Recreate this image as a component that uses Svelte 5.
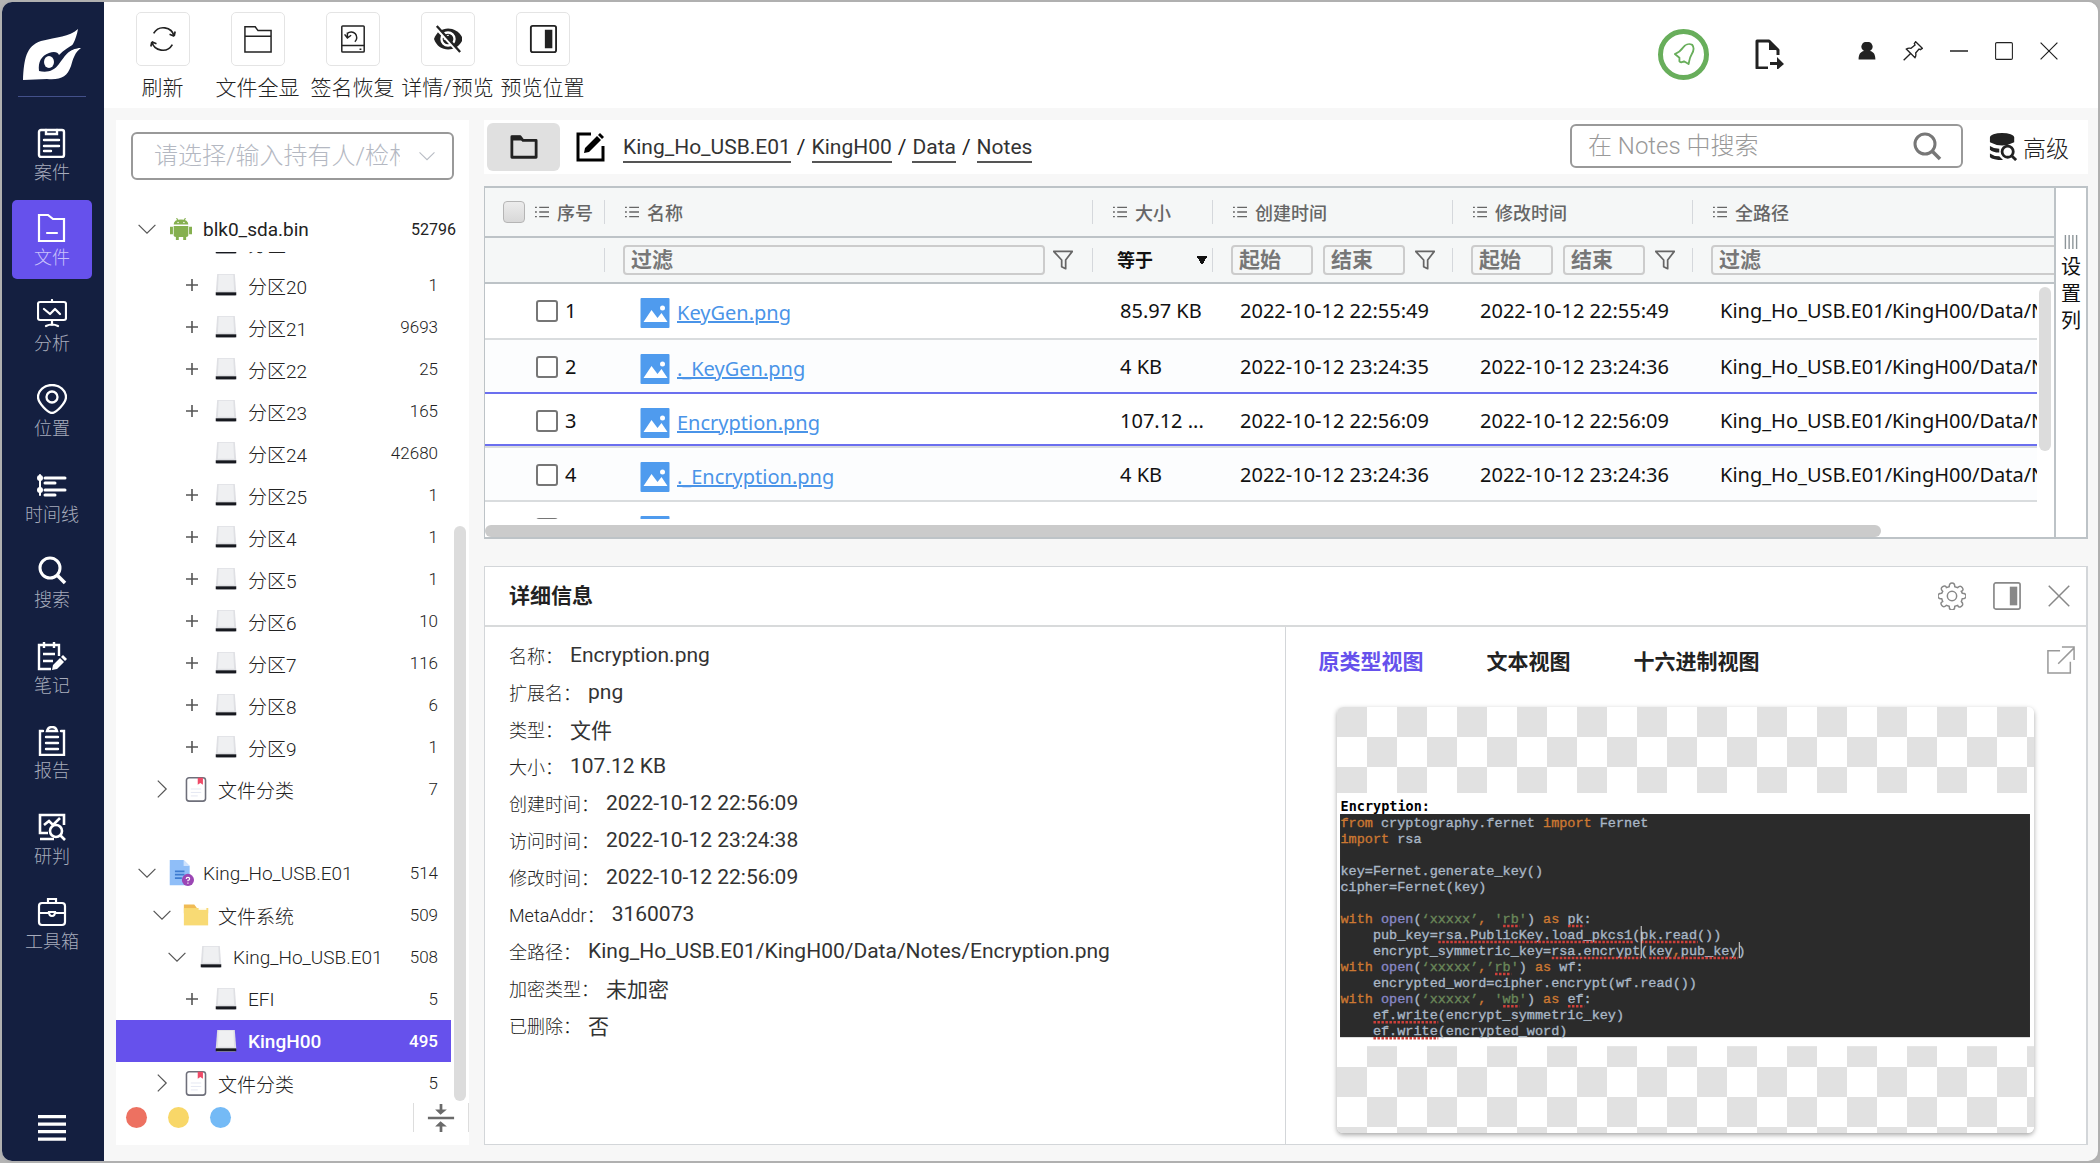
<script>
     const stroke = 'fill="none" stroke="currentColor"';

     const icons = {
          logo: `<path fill="#fff" d="M0 52C1 31 3 18 18 13C34 9 46 9 55 1C53 12 49 19 43 26C48 21 52 20 58 20C52 24 50 31 48 38C44 49 38 52 24 51Z"/><path fill="#141f40" d="M16 43C15 34 18 28 26 25C31 23 35 24 36 27C41 22 46 19 51 16L58 20C45 20 41 30 36 36C31 43 24 45 16 43Z"/><ellipse fill="#fff" cx="26" cy="34" rx="5" ry="6"/>`,
          case: `<g ${stroke} stroke-width="2.4" stroke-linecap="round"><rect x="2" y="2" width="25" height="27" rx="2"/><path d="M9 2v4h11V2M7 12h15M7 18h15M7 23h7"/></g>`,
          file: `<g ${stroke} stroke-width="2.2"><path d="M2 2h9l5 4h11v22H2Z"/><path d="M10 20h10" stroke-linecap="round"/></g>`,
          analyze: `<g ${stroke} stroke-width="2.2" stroke-linecap="round" stroke-linejoin="round"><rect x="1" y="3" width="28" height="18" rx="2"/><path d="M15 1v2M15 21v5M9 27q6-3 12 0M7 10l6 5 5-5 5 5"/></g>`,
          place: `<g ${stroke} stroke-width="2.3"><path d="M15 29C11 29 1 19 1 13A14 12 0 0 1 29 13C29 19 19 29 15 29Z"/><circle cx="15" cy="13" r="5.500"/></g>`,
          timeline: `<g ${stroke} stroke-width="3" stroke-linecap="round"><path d="M3 5v20" stroke-width="2"/><path d="M8 8h20M8 13h10M8 20h20M8 25h10"/></g><circle cx="3" cy="8" r="3" fill="currentColor"/><circle cx="3" cy="20" r="3" fill="currentColor"/>`,
          search: `<g ${stroke} stroke-width="3"><circle cx="13" cy="13" r="10"/><path d="M20 20l8 8" stroke-width="3.500"/></g>`,
          notes: `<g ${stroke} stroke-width="2.4"><path d="M14 28H2V4h20v11M7 1v6M17 1v6M6 13h12M6 20h10"/></g><path fill="currentColor" d="M15 29l1-5 7-7 4 4-7 7ZM24 16l2-2 4 4-2 2Z"/>`,
          report: `<g ${stroke} stroke-width="2.4" stroke-linecap="round"><path d="M6 5H3v24h24V5h-3M10 5q1-4 5-4t5 4ZM9 11h12M9 17h12M9 23h12"/></g>`,
          judge: `<g ${stroke} stroke-width="2.600"><path d="M27 13V3H3v18h8M3 27h14M7 13l5-4 4 4 7-7"/><circle cx="19" cy="19" r="6"/><path d="M23 23l5 5"/></g>`,
          toolbox: `<g ${stroke} stroke-width="2.2"><rect x="2" y="6" width="26" height="22" rx="3"/><path d="M11 6V2h8v4M2 16h10M18 16h10M12 15q0 4 3 4t3-4Z"/></g>`,
          refresh: `<g ${stroke} stroke-width="1.8"><path d="M5 9A12 12 0 0 1 27 12M27 12l-5-2M27 12l1-5M25 21A12 12 0 0 1 3 18M3 18l5 2M3 18l-1 5"/></g>`,
          folder: `<g ${stroke} stroke-width="1.6"><path d="M1 29V2h11l3 4h14v23ZM1 12h28"/></g>`,
          restore: `<g ${stroke} stroke-width="1.6"><rect x="3" y="1" width="24" height="28" rx="1"/><path d="M3 22h24M9 9a6 6 0 1 1 8 9M9 8v5M6 10l3 4 4-3M22 26h2"/></g>`,
          hide: `<path fill="currentColor" d="M0 15C5 0 25 0 31 15C25 30 5 30 0 15Z"/><circle cx="15" cy="15" r="7" fill="none" stroke="#fff" stroke-width="2.500"/><path d="M11 16q0-5 5-5" stroke="#fff" fill="none"/><path d="M1 2l25 27" stroke="#fff" stroke-width="3"/><path d="M3 1l25 28" stroke="currentColor" stroke-width="2.500"/>`,
          dock: `<rect x="2" y="1" width="27" height="28" rx="2" ${stroke} stroke-width="2"/><path fill="currentColor" d="M17 5h8v20h-8Z"/>`,
          tab: `<path ${stroke} stroke-width="3" stroke-linejoin="round" d="M2 4h9l3 4h14v18H2Z"/><path fill="currentColor" d="M2 3h9l3 5H2Z"/>`,
          edit: `<path ${stroke} stroke-width="3" d="M16 2H3v26h25V14"/><path fill="currentColor" d="M9 21l1-5L22 4l4 4-12 12ZM23 3l2-2 4 4-2 2Z"/>`,
          bell: `<path ${stroke} stroke-width="2" stroke-linejoin="round" d="M2 12C7 10 9 8 11 5C13 2 17 0 21 2C24 6 22 10 20 13C18 16 18 19 17 23L12 20Q9 22 7 20L7 16Z"/>`,
          exportDoc: `<path ${stroke} stroke-width="3" stroke-linejoin="round" d="M14 29H3V2h12l9 9v5"/><path fill="currentColor" d="M15 1v10h10ZM16 23h7v-5l7 7-7 6v-5h-7Z"/>`,
          person: `<path fill="currentColor" d="M15 0a8 8 0 0 1 5 15c6 1 9 6 9 14H1c0-8 3-13 9-14A8 8 0 0 1 15 0Z"/>`,
          pin: `<g ${stroke} stroke-width="2"><path d="M19 1l10 10-3 2-2-1-5 6q1 4-1 7L5 12q3-2 7-1l6-5-1-2ZM11 19L1 29"/></g>`,
          minus: `<path ${stroke} stroke-width="2.500" d="M0 15h30"/>`,
          square: `<rect x="1" y="1" width="28" height="28" rx="2" ${stroke} stroke-width="1.800"/>`,
          close: `<path ${stroke} stroke-width="2" d="M1 1l28 28M29 1L1 29"/>`,
          dbSearch: `<ellipse cx="14" cy="5" rx="13" ry="5" fill="currentColor"/><path fill="currentColor" d="M1 5h26v5q-13 7-26 0ZM1 14q4 3 10 3v4Q4 21 1 18ZM1 22q4 3 10 3l4 4Q4 29 1 26Z"/><g stroke="currentColor" fill="#fff" stroke-width="3"><circle cx="20" cy="20" r="6"/><path d="M24 24l5 5"/></g>`,
          gear: `<g ${stroke} stroke-width="1.600"><path d="M12 5q0-4 3-4t3 4l3 1q3-3 5 0t-1 4l1 2q4 0 4 3t-4 3l-1 3q3 3 0 5t-4-1l-3 1q0 4-3 4t-3-4l-3-1q-3 3-5 0t1-4l-1-3q-4 0-4-3t4-3l1-2q-3-3 0-5t4 1Z"/><circle cx="15" cy="15" r="5"/></g>`,
          dockLight: `<rect x="1" y="1" width="28" height="28" rx="2" ${stroke} stroke-width="1.800"/><path fill="currentColor" d="M18 5h8v20h-8Z"/>`,
          external: `<path ${stroke} stroke-width="1.600" d="M14 5H1v24h24V17M12 19L29 2M16 1h13v14"/>`,
          list: `<path ${stroke} stroke-width="3" d="M9 5h21M9 15h21M9 25h21M0 5h4M0 15h4M0 25h4"/>`,
          funnel: `<path ${stroke} stroke-width="2.600" stroke-linejoin="round" d="M1 2h28L19 15v13l-6-3V15Z"/>`,
          down: `<path ${stroke} stroke-width="2" d="M1 8l14 14L29 8"/>`,
          right: `<path ${stroke} stroke-width="2" d="M8 1l14 14L8 29"/>`,
          plus: `<path ${stroke} stroke-width="4" d="M15 0v30M0 15h30"/>`,
          disk: `<path fill="#dfe0e4" d="M3 0h24l2 26H1Z"/><path fill="#eff0f2" d="M5 1h20l1 22H4Z"/><path fill="#17191f" d="M1 25h28v4H1Z"/><path fill="#8b8d92" d="M2 29h26v1H2Z"/>`,
          android: `<path fill="#85b04f" d="M5 9q0-7 10-7t10 7ZM5 11h20v13q0 2-3 2v4h-4v-4h-6v4H8v-4q-3 0-3-2ZM0 12h4v10H0ZM26 12h4v10h-4Z"/><path d="M9 0l2 4M21 0l-2 4" stroke="#85b04f" stroke-width="1.500"/><circle cx="11" cy="6" r="1" fill="#fff"/><circle cx="19" cy="6" r="1" fill="#fff"/>`,
          category: `<rect x="4" y="2" width="22" height="27" rx="3" fill="#fff" stroke="#6e6f7a" stroke-width="1.800"/><path fill="#ef4b68" d="M17 2h6v8l-3-2-3 2Z"/><path d="M9 15h12M9 19h12M9 23h8" stroke="#e1e4f0"/>`,
          image: `<path fill="#8fbef8" d="M2 0h16l7 7v22H2Z"/><path fill="#cfe3fd" d="M18 0l7 7h-7Z"/><path d="M8 13h11M8 17h11M8 21h8" stroke="#3d7bd0" stroke-width="2"/><circle cx="23" cy="23" r="7" fill="#9b46b4"/><path d="M21 22q0-2 2-2t2 1.500-2 2v1M23 26v1.500" stroke="#fff" stroke-width="1.300" fill="none"/>`,
          yellow: `<path fill="#f0bb55" d="M1 3h12l3 4h13v6H1Z"/><path fill="#f8da74" d="M1 7h28v20H1Z"/><path d="M18 8h9" stroke="#fff" stroke-width="2"/>`,
          picture: `<rect width="29" height="30" rx="1" fill="#4f9bee"/><path fill="#fff" d="M3 24l8-12 6 8 4-5 6 9Z"/><circle cx="22" cy="10" r="2.500" fill="#fff"/>`,
          collapse: `<path fill="#6a6a6a" d="M13 0h3v6h5l-7 6-6-6h5ZM0 14h29v3H0ZM14 19l7 6h-5v6h-3v-6H8Z"/>`,
          menu: `<path ${stroke} stroke-width="3.500" d="M0 4h30M0 12h30M0 20h30M0 28h30"/>`,
          columns: `<path stroke="#8d9599" stroke-width="3" d="M2 0v30M10 0v30M18 0v30M26 0v30"/>`
     };

     const nav = [
          ['case', '案件'], ['file', '文件'], ['analyze', '分析'], ['place', '位置'], ['timeline', '时间线'],
          ['search', '搜索'], ['notes', '笔记'], ['report', '报告'], ['judge', '研判'], ['toolbox', '工具箱']
     ];
     let activeNav = $state('文件');

     const tools = [
          ['refresh', '刷新'], ['folder', '文件全显'], ['restore', '签名恢复'], ['hide', '详情/预览'], ['dock', '预览位置']
     ];

     const part = (n, count, arrow = 'plus') => ({ level: 4, arrow, icon: 'disk', name: `分区${n}`, count });
     const tree = [
          part(2, ''),
          part(20, 1), part(21, 9693), part(22, 25), part(23, 165), part(24, 42680, ''), part(25, 1),
          part(4, 1), part(5, 1), part(6, 10), part(7, 116), part(8, 6), part(9, 1),
          { level: 2, arrow: 'right', icon: 'category', name: '文件分类', count: 7 },
          null,
          { level: 1, arrow: 'down', icon: 'image', name: 'King_Ho_USB.E01', count: 514 },
          { level: 2, arrow: 'down', icon: 'yellow', name: '文件系统', count: 509 },
          { level: 3, arrow: 'down', icon: 'disk', name: 'King_Ho_USB.E01', count: 508 },
          { level: 4, arrow: 'plus', icon: 'disk', name: 'EFI', count: 5 },
          { level: 4, arrow: '', icon: 'disk', name: 'KingH00', count: 495 },
          { level: 2, arrow: 'right', icon: 'category', name: '文件分类', count: 5 }
     ];
     let selectedNode = $state('KingH00');

     const crumbs = ['King_Ho_USB.E01', 'KingH00', 'Data', 'Notes'];
     const headers = ['名称', '大小', '创建时间', '修改时间', '全路径'];

     const path = 'King_Ho_USB.E01/KingH00/Data/Notes/';
     const files = [
          { name: 'KeyGen.png', size: '85.97 KB', created: '2022-10-12 22:55:49', modified: '2022-10-12 22:55:49' },
          { name: '._KeyGen.png', size: '4 KB', created: '2022-10-12 23:24:35', modified: '2022-10-12 23:24:36' },
          { name: 'Encryption.png', size: '107.12 ...', created: '2022-10-12 22:56:09', modified: '2022-10-12 22:56:09' },
          { name: '._Encryption.png', size: '4 KB', created: '2022-10-12 23:24:36', modified: '2022-10-12 23:24:36' },
          { name: '', size: '', created: '', modified: '' }
     ];
     let selectedRow = $state(2);

     const details = [
          ['名称', 'Encryption.png'], ['扩展名', 'png'], ['类型', '文件'], ['大小', '107.12 KB'],
          ['创建时间', '2022-10-12 22:56:09'], ['访问时间', '2022-10-12 23:24:38'], ['修改时间', '2022-10-12 22:56:09'],
          ['MetaAddr', '3160073'], ['全路径', 'King_Ho_USB.E01/KingH00/Data/Notes/Encryption.png'],
          ['加密类型', '未加密'], ['已删除', '否']
     ];

     const views = ['原类型视图', '文本视图', '十六进制视图'];
     let view = $state('原类型视图');

     // k = keyword, b = builtin, s = string, t = plain; a third item marks a spell-check underline
     const source = [
          [['k', 'from'], ['t', ' cryptography.fernet '], ['k', 'import'], ['t', ' Fernet']],
          [['k', 'import'], ['t', ' rsa']],
          [],
          [['t', 'key=Fernet.generate_key()']],
          [['t', 'cipher=Fernet(key)']],
          [],
          [['k', 'with'], ['b', ' open'], ['t', '('], ['s', '‘xxxxx’'], ['k', ','], ['s', " '"], ['s', 'rb', 1], ['s', "'"], ['t', ') '], ['k', 'as'], ['t', ' '], ['t', 'pk', 1], ['t', ':']],
          [['t', '    pub_key='], ['t', 'rsa.PublicKey.load_pkcs1', 1], ['t', '('], ['t', 'pk.read', 1], ['t', '())']],
          [['t', '    encrypt_symmetric_key='], ['t', 'rsa.encrypt', 1], ['t', '('], ['t', 'key', 1], ['k', ',', 1], ['t', 'pub_key', 1], ['t', ')']],
          [['k', 'with'], ['b', ' open'], ['t', '('], ['s', '‘xxxxx’'], ['k', ','], ['s', '’'], ['s', 'rb', 1], ['s', "'"], ['t', ') '], ['k', 'as'], ['t', ' wf:']],
          [['t', '    encrypted_word=cipher.encrypt(wf.read())']],
          [['k', 'with'], ['b', ' open'], ['t', '('], ['s', '‘xxxxx’'], ['k', ','], ['s', " '"], ['s', 'wb', 1], ['s', "'"], ['t', ') '], ['k', 'as'], ['t', ' '], ['t', 'ef', 1], ['t', ':']],
          [['t', '    '], ['t', 'ef.write', 1], ['t', '(encrypt_symmetric_key)']],
          [['t', '    '], ['t', 'ef.write', 1], ['t', '(encrypted_word)']]
     ];

     const charWidth = 16.2;
     const squiggles = source.flatMap((line, row) => {
          let col = 0;
          const out = [];
          for (const [, text, bad] of line) {
               if (bad) out.push({ x: 8 + col * charWidth, w: text.length * charWidth, y: 74 + row * 32 });
               col += text.length;
          }
          return out;
     });
</script>

{#snippet icon(name, cls, box = '0 0 30 30')}
     <svg class="icon {cls}" viewBox={box} aria-hidden="true">{@html icons[name]}</svg>
{/snippet}

<div class="window">
     <aside class="sidebar">
          {@render icon('logo', 'logo', '0 0 58 52')}
          <nav>
               {#each nav as [key, label]}
                    <button class="nav-item" class:active={activeNav === label} onclick={() => (activeNav = label)}>
                         {@render icon(key, 'i30')}
                         <span>{label}</span>
                    </button>
               {/each}
          </nav>
          <button class="menu" aria-label="菜单">{@render icon('menu', 'i28')}</button>
     </aside>

     <div class="content">
          <header class="topbar">
               <div class="tools">
                    {#each tools as [key, label]}
                         <button class="tool">
                              <span class="tool-box">{@render icon(key, 'i28')}</span>
                              <span class="tool-label">{label}</span>
                         </button>
                    {/each}
               </div>
               <div class="status">
                    <button class="bell" aria-label="通知">{@render icon('bell', 'i22', '0 0 24 24')}</button>
                    <button aria-label="导出">{@render icon('exportDoc', 'i30')}</button>
               </div>
               <div class="controls">
                    <button aria-label="用户">{@render icon('person', 'i18')}</button>
                    <button aria-label="置顶">{@render icon('pin', 'i20')}</button>
                    <button aria-label="最小化">{@render icon('minus', 'i18')}</button>
                    <button aria-label="最大化">{@render icon('square', 'i18')}</button>
                    <button aria-label="关闭">{@render icon('close', 'i18')}</button>
               </div>
          </header>

          <div class="workspace">
               <section class="tree-panel">
                    <label class="owner">
                         <input type="text" placeholder="请选择/输入持有人/检材名称" aria-label="持有人" />
                         {@render icon('down', 'i16 faint')}
                    </label>
                    <button class="node root">
                         <span class="arrow">{@render icon('down', 'i18')}</span>
                         <span class="node-icon">{@render icon('android', 'i22')}</span>
                         <span class="node-name">blk0_sda.bin</span>
                         <span class="count">52796</span>
                    </button>
                    <div class="tree-area">
                         <div class="tree">
                              {#each tree as node}
                                   {#if node}
                                        <button
                                             class="node"
                                             class:selected={selectedNode === node.name}
                                             style={`padding-left: ${node.level * 15}px;`}
                                             onclick={() => (selectedNode = node.name)}
                                        >
                                             <span class="arrow">
                                                  {#if node.arrow}{@render icon(node.arrow, node.arrow === 'plus' ? 'i12' : 'i18')}{/if}
                                             </span>
                                             <span class="node-icon">{@render icon(node.icon, node.icon === 'disk' ? 'i22' : 'i26')}</span>
                                             <span class="node-name">{node.name}</span>
                                             <span class="count">{node.count}</span>
                                        </button>
                                   {:else}
                                        <div class="node"></div>
                                   {/if}
                              {/each}
                         </div>
                         <div class="tree-scroll"><div class="thumb"></div></div>
                    </div>
                    <footer class="tree-footer">
                         <button class="dot red" aria-label="红色标记"></button>
                         <button class="dot yellow" aria-label="黄色标记"></button>
                         <button class="dot blue" aria-label="蓝色标记"></button>
                         <button class="collapse" aria-label="全部折叠">{@render icon('collapse', 'i28', '0 0 29 31')}</button>
                    </footer>
               </section>

               <main>
                    <div class="crumb-bar">
                         <button class="tab" aria-label="文件夹">{@render icon('tab', 'i28')}</button>
                         <button class="edit" aria-label="编辑路径">{@render icon('edit', 'i30')}</button>
                         <div class="crumbs">
                              {#each crumbs as crumb, i}
                                   {#if i}<span>/</span>{/if}
                                   <a href="#{crumb}">{crumb}</a>
                              {/each}
                         </div>
                         <label class="search">
                              <input type="text" placeholder="在 Notes 中搜索" aria-label="搜索" />
                              {@render icon('search', 'i30')}
                         </label>
                         <button class="advanced">{@render icon('dbSearch', 'i28')}高级</button>
                    </div>

                    <section class="grid">
                         <div class="grid-main">
                              <table>
                                   <colgroup>
                                        <col class="c-seq" /><col class="c-name" /><col class="c-size" />
                                        <col class="c-date" /><col class="c-date" /><col class="c-path" />
                                   </colgroup>
                                   <thead>
                                        <tr class="titles">
                                             <th><div class="th seq"><input type="checkbox" class="check all" aria-label="全选" />{@render icon('list', 'i14')}序号</div></th>
                                             {#each headers as header}
                                                  <th><div class="th">{@render icon('list', 'i14')}{header}</div></th>
                                             {/each}
                                        </tr>
                                        <tr class="filters">
                                             <td><div class="th"></div></td>
                                             <td><div class="th"><input class="filter" placeholder="过滤" aria-label="过滤名称" />{@render icon('funnel', 'i20')}</div></td>
                                             <td><div class="th"><select aria-label="大小条件"><option>等于</option></select></div></td>
                                             {#each ['创建', '修改'] as kind}
                                                  <td>
                                                       <div class="th dates">
                                                            <input class="filter date" placeholder="起始" aria-label="{kind}起始" />
                                                            <input class="filter date" placeholder="结束" aria-label="{kind}结束" />
                                                            {@render icon('funnel', 'i20')}
                                                       </div>
                                                  </td>
                                             {/each}
                                             <td><div class="th"><input class="filter" placeholder="过滤" aria-label="过滤路径" /></div></td>
                                        </tr>
                                   </thead>
                                   <tbody>
                                        {#each files as file, i}
                                             <tr class:above={i === selectedRow - 1} class:current={i === selectedRow} onclick={() => (selectedRow = i)}>
                                                  <td class="seq-cell"><label><input type="checkbox" class="check" aria-label="选择" />{file.name ? i + 1 : ''}</label></td>
                                                  <td class="name-cell">{@render icon('picture', 'i30', '0 0 29 30')}<a href="#{file.name}">{file.name}</a></td>
                                                  <td>{file.size}</td>
                                                  <td>{file.created}</td>
                                                  <td>{file.modified}</td>
                                                  <td>{file.name ? path + file.name : ''}</td>
                                             </tr>
                                        {/each}
                                   </tbody>
                              </table>
                              <div class="y-scroll"><div class="thumb"></div></div>
                              <div class="x-scroll"><div class="thumb"></div></div>
                         </div>
                         <button class="set-columns">
                              {@render icon('columns', 'cols', '0 0 28 30')}
                              <span>设</span><span>置</span><span>列</span>
                         </button>
                    </section>

                    <section class="detail">
                         <header>
                              <h2>详细信息</h2>
                              <button aria-label="设置">{@render icon('gear', 'i28')}</button>
                              <button aria-label="停靠">{@render icon('dockLight', 'i28')}</button>
                              <button aria-label="关闭详情">{@render icon('close', 'i22')}</button>
                         </header>
                         <div class="detail-body">
                              <dl>
                                   {#each details as [label, value]}
                                        <div class="field"><dt>{label}：</dt><dd>{value}</dd></div>
                                   {/each}
                              </dl>
                              <div class="preview">
                                   <div class="views">
                                        {#each views as name}
                                             <button class:on={view === name} onclick={() => (view = name)}>{name}</button>
                                        {/each}
                                        <button class="pop" aria-label="新窗口打开">{@render icon('external', 'i28')}</button>
                                   </div>
                                   <div class="canvas">
                                        <svg class="shot" viewBox="0 0 1394 506">
                                             <rect width="1394" height="506" fill="#fff" />
                                             <text class="title" x="7" y="36">Encryption:</text>
                                             <rect x="6" y="42" width="1379" height="446" fill="#2b2b2b" />
                                             {#each source as line, row}
                                                  <text class="code" x="7" y={68 + row * 32}>{#each line as [kind, text]}<tspan class={kind}>{text}</tspan>{/each}</text>
                                             {/each}
                                             {#each squiggles as s}
                                                  <path class="squiggle" d="M{s.x} {s.y}h{s.w}" />
                                             {/each}
                                             <path class="caret" d="M608 266v64M804 298v32" />
                                        </svg>
                                   </div>
                              </div>
                         </div>
                    </section>
               </main>
          </div>
     </div>
</div>

<style>
     :global(body) {
          background: #b4b4b4;
          font-family: Roboto, "Noto Sans CJK SC", sans-serif;
          color: #222;
     }

     .window, .window * {
          box-sizing: border-box;
     }

     button {
          font: inherit;
          color: inherit;
          background: none;
          border: none;
          padding: 0;
          cursor: pointer;
     }

     input {
          font: inherit;
          outline: none;
     }

     .window {
          height: 100vh;
          border: 2px solid #b0b0b0;
          border-radius: 12px;
          overflow: hidden;
          display: flex;
          background: #f7f7f7;
     }

     .icon { display: block; flex: none; }
     .i12 { width: 12px; height: 12px; }
     .i14 { width: 14px; height: 14px; }
     .i16 { width: 16px; height: 16px; }
     .i18 { width: 18px; height: 18px; }
     .i20 { width: 20px; height: 20px; }
     .i22 { width: 22px; height: 22px; }
     .i26 { width: 26px; height: 26px; }
     .i28 { width: 28px; height: 28px; }
     .i30 { width: 30px; height: 30px; }
     .faint { color: #b8bcc4; }

     /* sidebar */
     .sidebar {
          width: 102px;
          flex: none;
          background: #141f40;
          color: #fff;
          display: flex;
          flex-direction: column;
          align-items: center;
          padding: 26px 2px 0 0;
     }

     .logo {
          width: 58px;
          height: 52px;
     }

     nav {
          margin-top: 16px;
          padding-top: 18px;
          border-top: 1px solid #43508a;
          height: 867px;
          max-height: 80vh;
          width: 68px;
          display: flex;
          flex-direction: column;
          align-items: center;
          justify-content: space-between;
     }

     .nav-item {
          width: 80px;
          height: 79px;
          border-radius: 5px;
          display: flex;
          flex-direction: column;
          align-items: center;
          padding-top: 13px;
          font-size: 18px;
          line-height: 26px;
          gap: 2px;
     }

     .nav-item span {
          color: #a7acbc;
          white-space: nowrap;
          font-weight: 300;
     }

     .nav-item.active { background: #6651ec; }
     .nav-item.active span { color: #c9c1fb; }

     .menu {
          margin: auto 0 20px;
     }

     .content {
          flex: 1;
          min-width: 0;
          display: flex;
          flex-direction: column;
     }

     /* top bar */
     .topbar {
          height: 106px;
          flex: none;
          background: #fff;
          display: flex;
          padding: 10px 40px 0 11px;
     }

     .tools {
          display: flex;
          flex: 1;
     }

     .tool {
          width: 95px;
          display: flex;
          flex-direction: column;
          align-items: center;
          gap: 7px;
          font-size: 21px;
          font-weight: 300;
          line-height: 30px;
          white-space: nowrap;
          height: 91px;
     }

     .tool-box {
          width: 54px;
          height: 54px;
          border: 1px solid #e4e4e4;
          border-radius: 5px;
          display: flex;
          align-items: center;
          justify-content: center;
     }

     .tool-label {
          display: flex;
          justify-content: center;
          width: 100%;
     }

     .status {
          display: flex;
          align-items: center;
          height: 84px;
          gap: 45px;
     }

     .bell {
          width: 51px;
          height: 51px;
          border: 5px solid #68ae5b;
          border-radius: 50%;
          color: #68ae5b;
          display: flex;
          align-items: center;
          justify-content: center;
     }

     .controls {
          display: flex;
          align-items: center;
          height: 78px;
          gap: 27px;
          margin-left: 74px;
     }

     .workspace {
          flex: 1;
          min-height: 0;
          display: flex;
          gap: 15px;
          padding: 12px 10px 16px 12px;
     }

     /* tree */
     .tree-panel {
          width: 353px;
          flex: none;
          background: #fff;
          display: flex;
          flex-direction: column;
          padding-top: 12px;
     }

     .owner {
          height: 48px;
          margin: 0 15px;
          border: 2px solid #999;
          border-radius: 6px;
          display: flex;
          align-items: center;
          justify-content: space-between;
          padding: 0 17px 0 21px;
     }

     .owner input {
          border: none;
          padding: 0;
          width: 246px;
          font-size: 24px;
          font-weight: 300;
          background: none;
     }

     .owner input::placeholder { color: #b4b8c2; opacity: 1; }

     .node {
          width: 100%;
          height: 42px;
          display: flex;
          align-items: center;
          font-size: 19px;
          font-weight: 300;
          text-align: left;
          color: #222;
     }

     .root {
          height: 46px;
          margin-top: 26px;
          padding: 0 13px 0 15px;
          font-size: 19px;
          font-weight: 400;
     }

     .arrow {
          width: 32px;
          flex: none;
          display: flex;
          justify-content: center;
          color: #555;
     }

     .node-icon {
          width: 36px;
          flex: none;
          display: flex;
          justify-content: center;
     }

     .node-name {
          flex: 1;
          padding-left: 4px;
          white-space: nowrap;
     }

     .count {
          font-size: 17px;
     }

     .root .count { font-size: 16px; }

     .tree-area {
          flex: 1;
          min-height: 0;
          display: flex;
          overflow: hidden;
     }

     .tree {
          flex: 1;
          margin-top: -30px;
          min-width: 0;
     }

     .tree .node { padding-right: 13px; }

     .node.selected {
          background: #6651ec;
          color: #fff;
          font-weight: 500;
     }

     .tree-scroll {
          width: 18px;
          padding: 274px 3px 0;
     }

     .thumb {
          background: #dcdcdc;
          border-radius: 6px;
          height: 100%;
     }

     .tree-footer {
          height: 44px;
          flex: none;
          padding: 2px 0 13px 10px;
          display: flex;
          align-items: center;
          gap: 21px;
     }

     .dot {
          width: 21px;
          height: 21px;
          border-radius: 50%;
     }

     .red { background: #ed7161; }
     .yellow { background: #f8d768; }
     .blue { background: #74baf6; }

     .collapse {
          margin-left: auto;
          height: 29px;
          padding: 0 13px;
          border-left: 1px solid #ddd;
          border-right: 1px solid #ddd;
          display: flex;
          align-items: center;
     }

     /* breadcrumb */
     main {
          flex: 1;
          min-width: 0;
          display: flex;
          flex-direction: column;
     }

     .crumb-bar {
          height: 54px;
          flex: none;
          background: #fff;
          display: flex;
          align-items: center;
          padding: 0 19px 0 3px;
     }

     .tab {
          width: 73px;
          height: 48px;
          border-radius: 6px;
          background: #e0e0e0;
          display: flex;
          align-items: center;
          justify-content: center;
     }

     .edit {
          margin: 0 18px 0 15px;
          color: #000;
     }

     .crumbs {
          flex: 1;
          display: flex;
          gap: 6px;
          font-size: 21px;
          line-height: 28px;
          padding-top: 1px;
     }

     .crumbs a {
          color: #333;
          text-decoration: none;
          border-bottom: 2px solid #555;
     }

     .search {
          width: 393px;
          height: 44px;
          margin: 0 26px 2px 20px;
          border: 2px solid #999;
          border-radius: 6px;
          display: flex;
          align-items: center;
          padding: 0 19px 0 16px;
          color: #777;
     }

     .search input {
          flex: 1;
          min-width: 0;
          border: none;
          padding: 0;
          font-size: 24px;
          font-weight: 300;
          background: none;
     }

     .search input::placeholder { color: #999; opacity: 1; }

     .advanced {
          display: flex;
          align-items: center;
          gap: 6px;
          font-size: 23px;
          font-weight: 300;
     }

     /* file grid */
     .grid {
          flex: none;
          margin-top: 12px;
          height: 353px;
          border: 2px solid #bdc3c7;
          border-left-width: 1px;
          background: #fff;
          display: flex;
     }

     .grid-main {
          flex: 1;
          min-width: 0;
          position: relative;
          overflow: hidden;
          border-right: 2px solid #bdc3c7;
     }

     table {
          table-layout: fixed;
          width: 1808px;
          border-collapse: separate;
          border-spacing: 0;
     }

     .c-seq, .c-size { width: 120px; }
     .c-name { width: 488px; }
     .c-date { width: 240px; }
     .c-path { width: 600px; }

     thead th, thead td {
          padding: 0;
          background: #f5f7f7;
          border-bottom: 2px solid #bdc3c7;
          text-align: left;
     }

     .titles th { height: 50px; }
     .filters td { height: 46px; }

     .th {
          height: 24px;
          padding-left: 20px;
          border-right: 1px solid #d5d8dc;
          display: flex;
          align-items: center;
          gap: 8px;
          font-size: 18px;
          font-weight: 500;
          color: #666;
     }

     .seq { padding-left: 18px; }

     .check {
          appearance: none;
          width: 22px;
          height: 22px;
          margin: 0;
          border: 2px solid #767676;
          border-radius: 3px;
          background: #fff;
     }

     .all {
          border: 1px solid #b5b5b5;
          background: linear-gradient(#ececec, #d8d8d8);
          border-radius: 4px;
          margin-right: 2px;
     }

     .filter {
          flex: 1;
          min-width: 0;
          height: 30px;
          border: 2px solid #ccc;
          border-radius: 4px;
          background: none;
          padding: 0 6px;
          font-size: 21px;
          font-weight: 700;
     }

     .filters .th { padding: 0 19px 0 18px; }
     .filters .dates { gap: 10px; }

     .filter::placeholder { color: #777; opacity: 1; }

     .date { flex: 0 0 82px; }

     select {
          appearance: none;
          border: none;
          outline: none;
          flex: 1;
          padding: 0 0 0 6px;
          margin-right: -14px;
          font: inherit;
          font-weight: 700;
          color: #111;
          background: conic-gradient(from -32deg at 50% 100%, #111 64deg, transparent 0) right center / 10px 9px no-repeat;
     }

     tbody td {
          height: 54px;
          padding: 2px 10px 0 27px;
          border-bottom: 2px solid #d9dcde;
          vertical-align: top;
          font-family: "Noto Sans", "Noto Sans CJK SC", sans-serif;
          font-size: 20px;
          line-height: 50px;
          white-space: nowrap;
          overflow: hidden;
          color: #111;
     }

     tbody tr:first-child td { height: 56px; }
     tbody tr:nth-child(even) td { background: #fcfdfe; }
     tbody tr.above td { border-bottom-color: #6b6fef; }
     tbody tr.current td { box-shadow: inset 0 -2px #6b6fef; }

     tbody .seq-cell { padding-left: 51px; }

     .seq-cell label {
          display: flex;
          align-items: center;
          gap: 7px;
          min-height: 50px;
     }

     tbody .name-cell {
          padding: 6px 0 0 35px;
          line-height: 46px;
     }

     .name-cell .icon {
          float: left;
          margin: 8px 7px 0 0;
     }

     .name-cell a { color: #4a94e8; }

     .y-scroll {
          position: absolute;
          top: 96px;
          right: 0;
          bottom: 0;
          width: 17px;
          background: #fff;
          padding: 3px 3px 86px 2px;
     }

     .x-scroll {
          position: absolute;
          left: 0;
          right: 0;
          bottom: 0;
          height: 18px;
          padding: 6px 0 0;
          background: #fff;
     }

     .x-scroll .thumb {
          width: 89%;
          background: #cbcbcb;
     }

     .set-columns {
          width: 30px;
          flex: none;
          padding-bottom: 202px;
          display: flex;
          flex-direction: column;
          align-items: center;
          justify-content: flex-end;
          font-size: 20px;
          line-height: 27px;
          color: #111;
     }

     .cols {
          width: 16px;
          height: 14px;
          margin-bottom: 5px;
     }

     /* detail */
     .detail {
          flex: 1;
          min-height: 0;
          margin-top: 27px;
          background: #fff;
          border: 1px solid #d3d6d9;
          border-right-width: 2px;
          display: flex;
          flex-direction: column;
     }

     .detail header {
          height: 60px;
          flex: none;
          border-bottom: 2px solid #d8dadb;
          display: flex;
          align-items: center;
          gap: 27px;
          padding: 0 16px 0 24px;
          color: #888;
     }

     h2 {
          flex: 1;
          margin: 0;
          font-size: 21px;
          line-height: 26px;
          color: #222;
     }

     .detail-body {
          flex: 1;
          min-height: 0;
          display: flex;
     }

     dl {
          flex: 1;
          margin: 0;
          padding: 9px 24px;
          border-right: 1px solid #d3d6d9;
     }

     .field {
          height: 37px;
          display: flex;
          align-items: center;
          gap: 7px;
     }

     dt {
          font-size: 18px;
          font-weight: 300;
     }

     dd {
          margin: 0;
          font-size: 21px;
          color: #333;
     }

     .preview {
          flex: 0 0 50%;
          padding: 15px 11px 11px 33px;
          display: flex;
          flex-direction: column;
     }

     .views {
          display: flex;
          align-items: center;
          gap: 63px;
          height: 36px;
          flex: none;
          font-size: 21px;
          font-weight: 700;
     }

     .views .on { color: #6651ec; }

     .pop {
          margin-left: auto;
          color: #999;
     }

     .canvas {
          flex: 1;
          margin: 29px 41px 0 18px;
          border-radius: 6px;
          overflow: hidden;
          display: flex;
          align-items: center;
          background: repeating-conic-gradient(#fff 0 25%, #e1e1e1 0 50%) 0 0 / 60px 60px;
          box-shadow: 0 2px 5px rgba(0, 0, 0, 0.35);
     }

     .shot {
          display: block;
          width: 100%;
     }

     .shot text { white-space: pre; }

     .title {
          font: 700 27px "DejaVu Sans Mono", monospace;
          fill: #000;
     }

     .code {
          font: 400 27px "Liberation Mono", monospace;
          stroke-width: 0.7;
     }

     .k { fill: #cc7832; stroke: #cc7832; }
     .b { fill: #8888c6; stroke: #8888c6; }
     .s { fill: #6a8759; stroke: #6a8759; }
     .t { fill: #a9b7c6; stroke: #a9b7c6; }

     .squiggle {
          stroke: #d0403a;
          stroke-width: 5;
          stroke-dasharray: 5 3;
     }

     .caret {
          stroke: #ddd;
          stroke-width: 2;
     }
</style>
